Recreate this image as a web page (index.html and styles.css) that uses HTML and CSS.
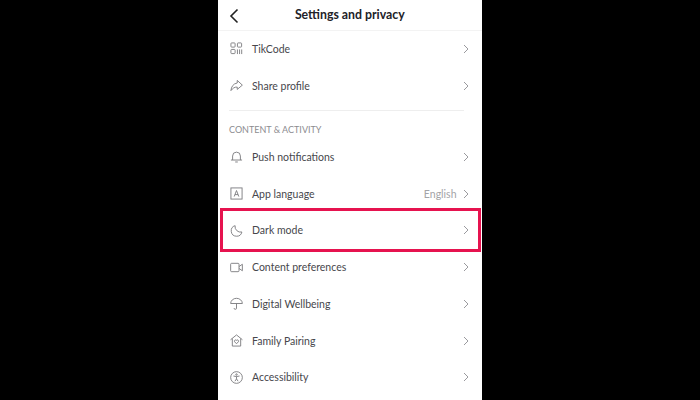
FILE: index.html
```html
<!DOCTYPE html>
<html lang="en">
<head>
    <meta charset="UTF-8">
    <title>Settings and privacy</title>
    <link rel="stylesheet" href="styles.css">
</head>
<body>
    <div class="phone">
        <div class="topbar">
            <svg class="back" width="12" height="18" viewBox="0 0 12 18"><path d="M9.500 2.500 3 9l6.500 6.500"/></svg>
            <h1>Settings and privacy</h1>
        </div>

        <div class="row">
            <svg class="icon" viewBox="0 0 14 14"><rect x="1" y="1" width="4.500" height="4.500" rx=".8"/><rect x="8" y="1" width="4.500" height="4.500" rx=".8"/><rect x="1" y="8" width="4.500" height="4.500" rx=".8"/><path d="M8 8v5M10.300 8v5M12.600 8v5"/></svg>
            <span class="label">TikCode</span>
            <svg class="chev" viewBox="0 0 8 12"><path d="M2 2 6 6 2 10"/></svg>
        </div>
        <div class="row">
            <svg class="icon" viewBox="0 0 14 14"><path d="M7.800 1.500 13.300 6.600 7.800 11.200V8.700C5 8.500 3 9.800 1 12.500 1.300 8.500 3.500 4.900 7.800 4.300Z"/></svg>
            <span class="label">Share profile</span>
            <svg class="chev" viewBox="0 0 8 12"><path d="M2 2 6 6 2 10"/></svg>
        </div>

        <div class="divider"></div>
        <div class="section">CONTENT &amp; ACTIVITY</div>

        <div class="row">
            <svg class="icon" viewBox="0 0 14 14"><path d="M1 10.800h12M2.800 10.800V6.500a4.200 4.200 0 0 1 8.400 0v4.300M5.600 12.900h2.800"/></svg>
            <span class="label">Push notifications</span>
            <svg class="chev" viewBox="0 0 8 12"><path d="M2 2 6 6 2 10"/></svg>
        </div>
        <div class="row">
            <svg class="icon" viewBox="0 0 14 14"><rect x="1" y="1" width="12" height="12"/><path d="M4.500 10.300 7 3.800l2.500 6.500M5.400 8.200h3.200"/></svg>
            <span class="label">App language</span>
            <span class="value">English</span>
            <svg class="chev" viewBox="0 0 8 12"><path d="M2 2 6 6 2 10"/></svg>
        </div>
        <div class="row selected">
            <svg class="icon" viewBox="0 0 14 14"><path d="M5.500 1.800A5.800 5.800 0 1 0 12.800 8.600 6 6 0 0 1 5.500 1.800Z"/></svg>
            <span class="label">Dark mode</span>
            <svg class="chev" viewBox="0 0 8 12"><path d="M2 2 6 6 2 10"/></svg>
        </div>
        <div class="row">
            <svg class="icon" viewBox="0 0 14 14"><rect x="0.700" y="2.500" width="9" height="9" rx="1"/><path d="M9.700 6 13.300 3.500v7L9.700 8"/></svg>
            <span class="label">Content preferences</span>
            <svg class="chev" viewBox="0 0 8 12"><path d="M2 2 6 6 2 10"/></svg>
        </div>
        <div class="row">
            <svg class="icon" viewBox="0 0 14 14"><path d="M.7 7a6.300 5.600 0 0 1 12.600 0ZM7 7v5a1.300 1.300 0 0 1-2.600 0"/></svg>
            <span class="label">Digital Wellbeing</span>
            <svg class="chev" viewBox="0 0 8 12"><path d="M2 2 6 6 2 10"/></svg>
        </div>
        <div class="row">
            <svg class="icon" viewBox="0 0 14 14"><path d="M.6 6.200 7 1l6.400 5.200M2.500 4.900V13h9V4.900"/><path d="M7 10.500 4.900 8.300a1.300 1.300 0 0 1 2.100-1.500 1.300 1.300 0 0 1 2.100 1.500Z"/></svg>
            <span class="label">Family Pairing</span>
            <svg class="chev" viewBox="0 0 8 12"><path d="M2 2 6 6 2 10"/></svg>
        </div>
        <div class="row">
            <svg class="icon" viewBox="0 0 14 14"><circle cx="7" cy="7" r="6.300"/><circle cx="7" cy="3.800" r=".8"/><path d="M3.700 5.400 7 6l3.300-.6M7 6v2.500M5.300 11 7 8.500 8.700 11"/></svg>
            <span class="label">Accessibility</span>
            <svg class="chev" viewBox="0 0 8 12"><path d="M2 2 6 6 2 10"/></svg>
        </div>
    </div>
</body>
</html>
```

FILE: styles.css
```css
body {
    margin: 0;
    height: 400px;
    overflow: hidden;
    background: #000;
    font-family: "Lato", "Liberation Sans", sans-serif;
    color: #47474c;
}

.phone {
    width: 263.500px;
    height: 400px;
    margin-left: 218px;
    background: #fff;
    overflow: hidden;
}

.topbar {
    position: relative;
    height: 29.500px;
    display: flex;
    align-items: center;
    justify-content: center;
    border-bottom: 1px solid #f3f3f3;
}

.topbar h1 {
    margin: 0;
    font-size: 12.300px;
    font-weight: 700;
    color: #222228;
}

.back {
    position: absolute;
    left: 10px;
    top: 7px;
    fill: none;
    stroke: #222;
    stroke-width: 1.600;
}

.row {
    position: relative;
    height: 36.750px;
    display: flex;
    align-items: center;
    padding: 0 12px;
}

.icon {
    width: 13px;
    height: 13px;
    flex: none;
    margin-right: 9px;
    fill: none;
    stroke: #7d7d81;
    stroke-width: 1;
}

.label {
    flex: 1;
    font-size: 10.500px;
}

.value {
    font-size: 10.500px;
    color: #a3a3a7;
    margin-right: 5px;
}

.chev {
    width: 8px;
    height: 12px;
    flex: none;
    fill: none;
    stroke: #9a9a9e;
    stroke-width: 1;
}

.selected::after {
    content: "";
    position: absolute;
    left: 1.500px;
    top: -4px;
    width: 255.500px;
    height: 38px;
    border: 3.500px solid #e6134f;
}

.divider {
    height: 1px;
    margin: 5.500px 18px 0 11px;
    background: #eeeeee;
}

.section {
    height: 14.400px;
    padding: 13.500px 0 0 11px;
    font-size: 9px;
    color: #8c8c90;
}
```
